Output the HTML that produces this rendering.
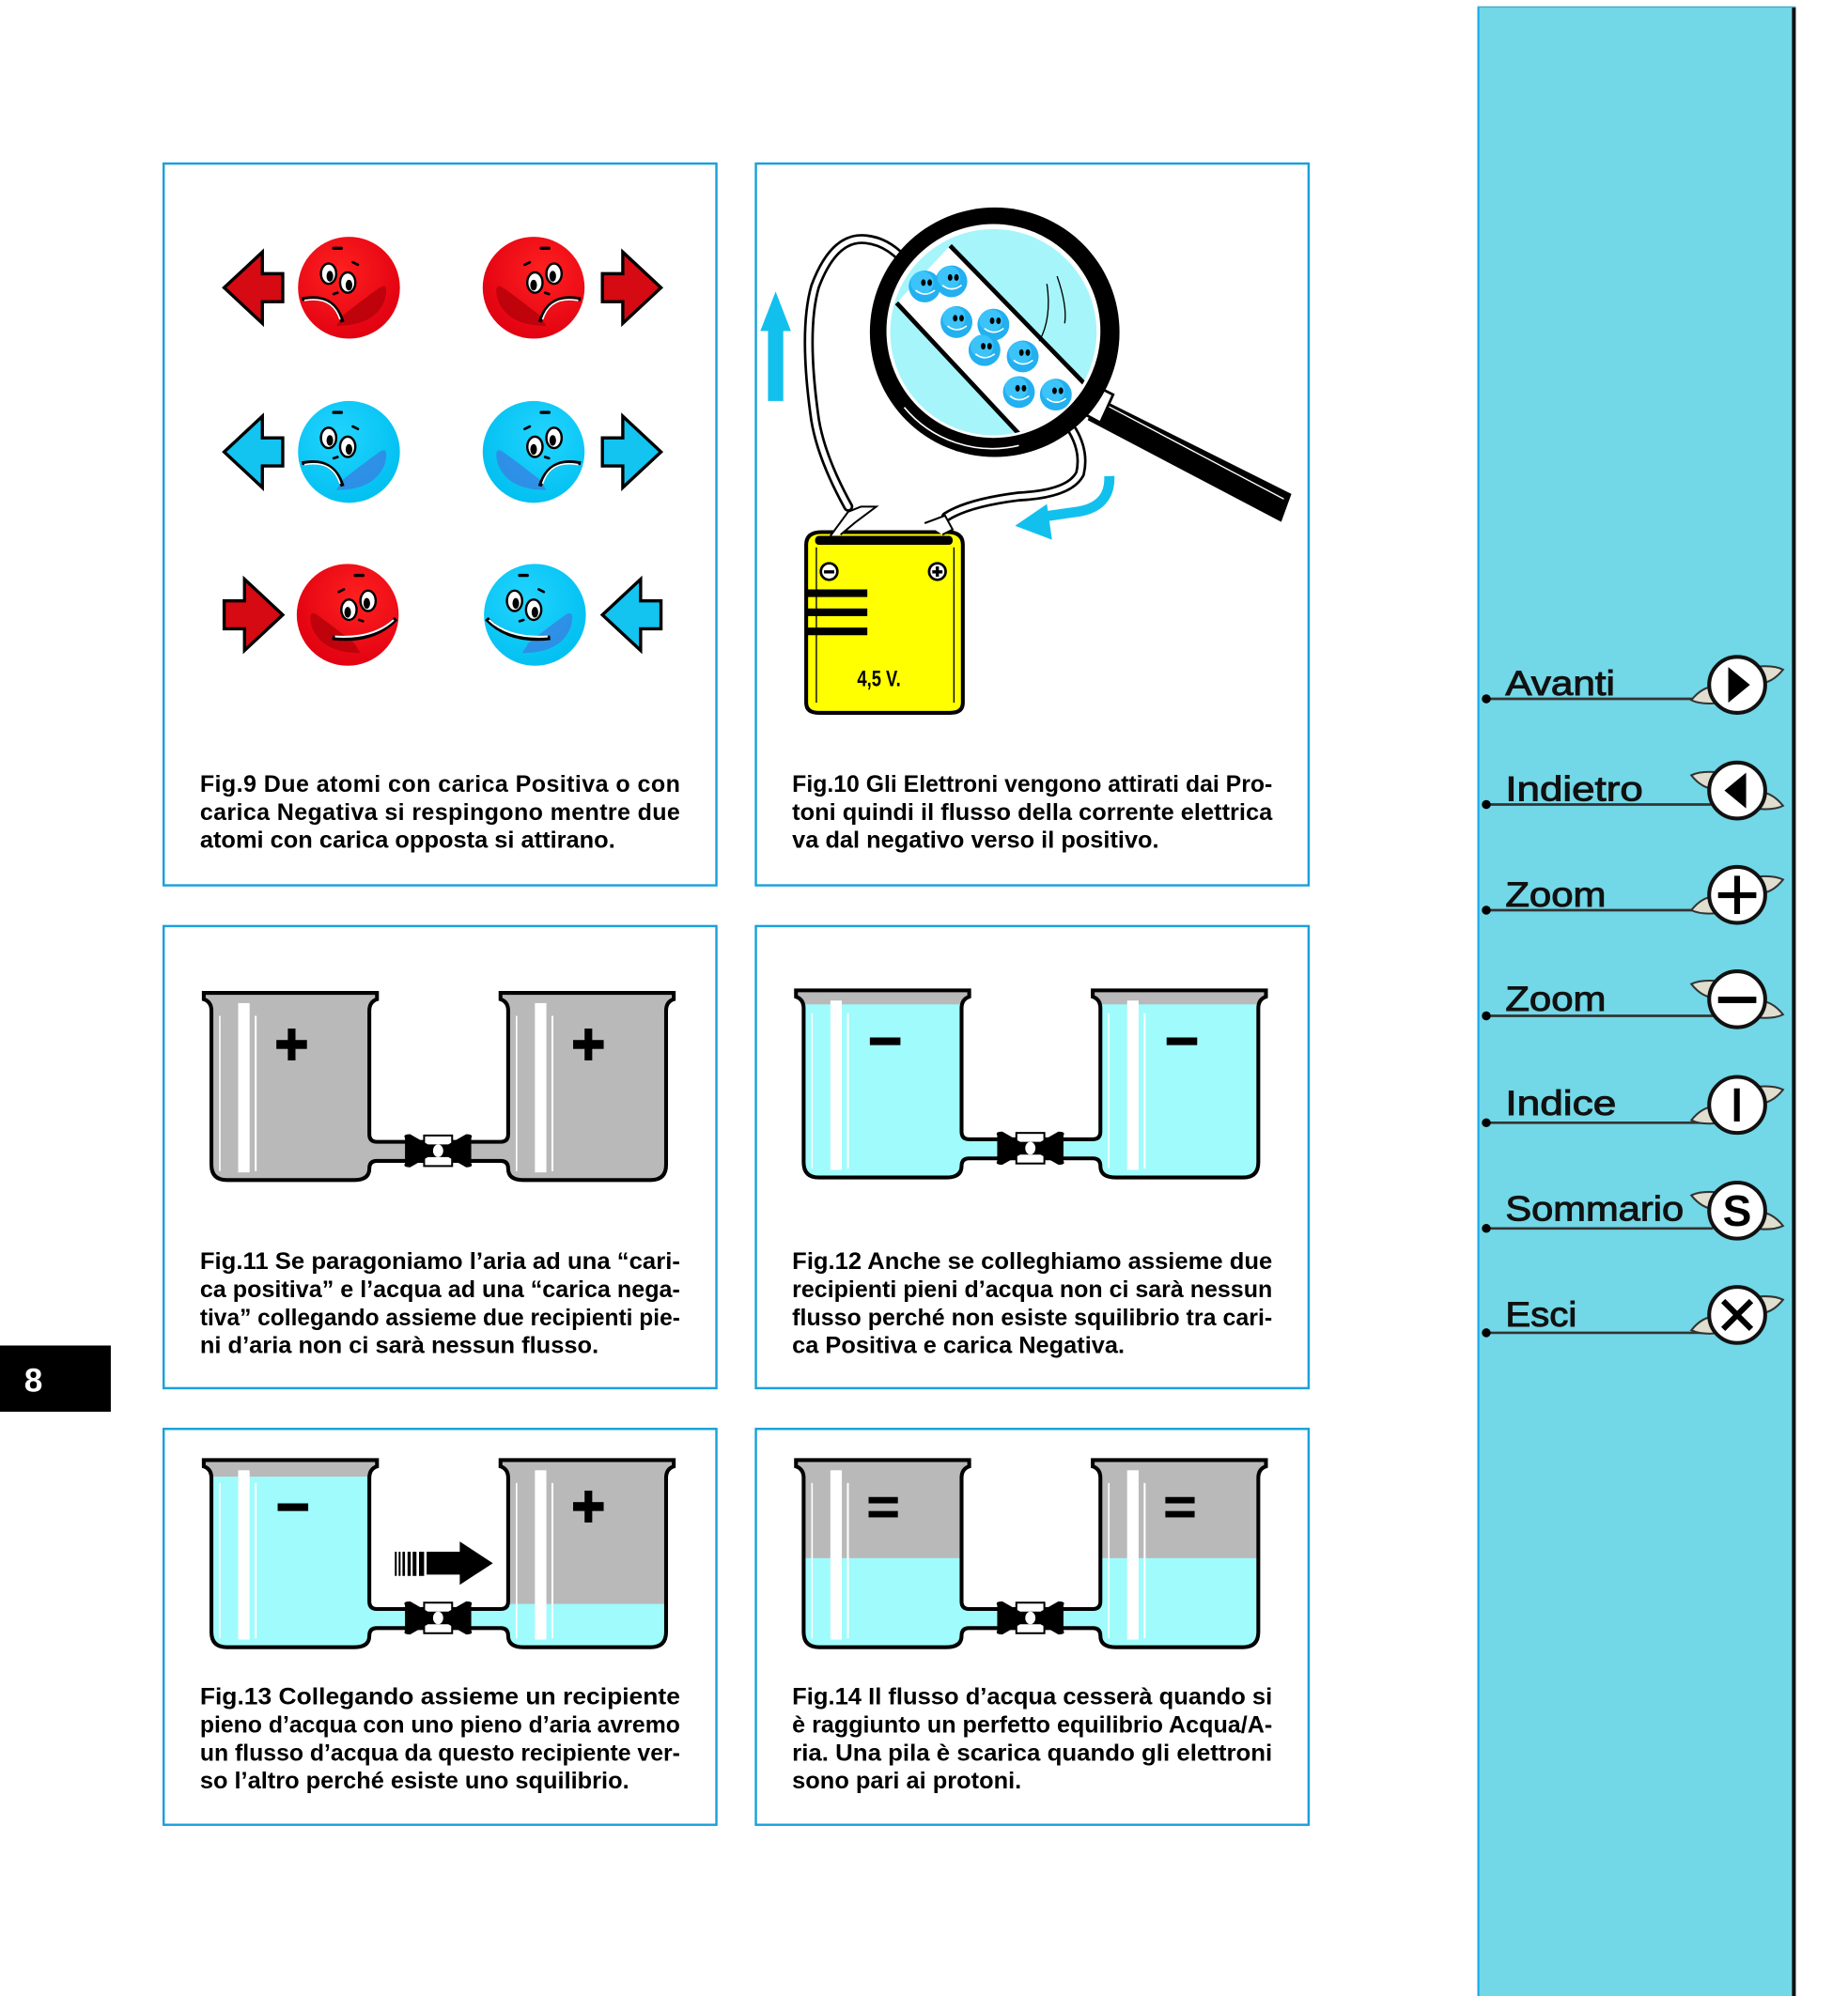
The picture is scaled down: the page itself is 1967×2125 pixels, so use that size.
<!DOCTYPE html>
<html><head><meta charset="utf-8">
<style>
html,body{margin:0;padding:0;background:#fff;width:1967px;height:2125px;overflow:hidden}
svg{display:block}
.cap{font-family:"Liberation Sans",Arial,sans-serif;font-weight:bold;font-size:18.5px;fill:#000}
.nav{font-family:"Liberation Sans",Arial,sans-serif;font-size:27px;fill:#111;stroke:#111;stroke-width:0.7}
</style></head>
<body>
<svg width="1967" height="2125" viewBox="0 0 1451 1568" preserveAspectRatio="none" xmlns="http://www.w3.org/2000/svg">
<defs>
 <path id="bk" d="M0,0 H136 V5 Q130,7 130,14 V111 Q130,117 136,117 H233 Q239,117 239,111 V14 Q239,7 233,5 V0 H369 V5 Q363,7 363,14 V135 Q363,147 351,147 H251 Q239,147 239,138 Q239,132 233,132 H136 Q130,132 130,138 Q130,147 118,147 H18 Q6,147 6,135 V14 Q6,7 0,5 Z"/>
 <clipPath id="bkc"><use href="#bk"/></clipPath>
 <g id="valve">
  <rect x="-11" y="-12" width="22" height="24" fill="#fff" stroke="#000" stroke-width="1.5"/>
  <path d="M-26,-10 Q-28,-13 -22,-13 L-8,-5 L8,-5 L22,-13 Q28,-13 26,-10 L26,10 Q28,13 22,13 L8,5 L-8,5 L-22,13 Q-28,13 -26,10 Z" fill="#000"/>
  <ellipse cx="0" cy="0" rx="4" ry="5" fill="#fff"/>
 </g>
 <g id="stripes">
  <rect x="27" y="8" width="9" height="133" fill="#fff"/>
  <rect x="40" y="18" width="1.5" height="122" fill="#fff"/>
  <rect x="12" y="18" width="1.2" height="122" fill="#fff"/>
  <rect x="260" y="8" width="9" height="133" fill="#fff"/>
  <rect x="273" y="18" width="1.5" height="122" fill="#fff"/>
  <rect x="245" y="18" width="1.2" height="122" fill="#fff"/>
 </g>
 <radialGradient id="rg" cx="0.4" cy="0.35" r="0.7"><stop offset="0" stop-color="#ff2020"/><stop offset="1" stop-color="#e00010"/></radialGradient>
 <radialGradient id="bg" cx="0.4" cy="0.35" r="0.7"><stop offset="0" stop-color="#22d4ff"/><stop offset="1" stop-color="#00bff0"/></radialGradient>
 <g id="eyes">
  <ellipse cx="-16" cy="-11" rx="6" ry="8" fill="#fff" stroke="#000" stroke-width="1.8"/>
  <ellipse cx="-15" cy="-9" rx="2.6" ry="4.2" fill="#000"/>
  <ellipse cx="-1" cy="-4" rx="6" ry="8" fill="#fff" stroke="#000" stroke-width="1.8"/>
  <ellipse cx="0" cy="-2" rx="2.6" ry="4.2" fill="#000"/>
  <path d="M-12,-31 h6" stroke="#000" stroke-width="2.5" stroke-linecap="round"/>
  <path d="M3,-20 l4,2" stroke="#000" stroke-width="2" stroke-linecap="round"/>
  <path d="M-12,5 l3,-1" stroke="#000" stroke-width="2" stroke-linecap="round"/>
 </g>
 <g id="sadR">
  <circle r="40" fill="url(#rg)"/>
  <path d="M-10,30 Q20,30 28,10 Q32,-5 24,0 Q10,10 -5,22 Z" fill="#b00008" opacity="0.75"/>
  <use href="#eyes"/>
  <path d="M-37,9 Q-12,4 -5,27" fill="none" stroke="#000" stroke-width="3"/>
  <path d="M-35,10 Q-13,6 -7,25" fill="none" stroke="#fff" stroke-width="1.2"/>
 </g>
 <g id="sadB">
  <circle r="40" fill="url(#bg)"/>
  <path d="M-10,30 Q20,30 28,10 Q32,-5 24,0 Q10,10 -5,22 Z" fill="#3a7de0" opacity="0.75"/>
  <use href="#eyes"/>
  <path d="M-37,9 Q-12,4 -5,27" fill="none" stroke="#000" stroke-width="3"/>
  <path d="M-35,10 Q-13,6 -7,25" fill="none" stroke="#fff" stroke-width="1.2"/>
 </g>
 <g id="hapR">
  <circle r="40" fill="url(#rg)"/>
  <path d="M-10,30 Q20,30 28,10 Q32,-5 24,0 Q10,10 -5,22 Z" fill="#b00008" opacity="0.75"/>
  <use href="#eyes"/>
  <path d="M-38,3 Q-20,22 12,18" fill="none" stroke="#000" stroke-width="3.5"/>
  <path d="M-36,4 Q-20,19 10,17" fill="none" stroke="#fff" stroke-width="1.5"/>
 </g>
 <g id="hapB">
  <circle r="40" fill="url(#bg)"/>
  <path d="M-10,30 Q20,30 28,10 Q32,-5 24,0 Q10,10 -5,22 Z" fill="#3a7de0" opacity="0.75"/>
  <use href="#eyes"/>
  <path d="M-38,3 Q-20,22 12,18" fill="none" stroke="#000" stroke-width="3.5"/>
  <path d="M-36,4 Q-20,19 10,17" fill="none" stroke="#fff" stroke-width="1.5"/>
 </g>
 <path id="arrL" d="M0,0 L30,-28 V-11 H46 V11 H30 V28 Z" stroke="#000" stroke-width="2.5" stroke-linejoin="miter"/>
 <g id="elec"><circle r="12.5" fill="#22b0f0"/><circle cx="-2" cy="-3" r="9" fill="#4fd0ff" opacity="0.6"/><ellipse cx="-1" cy="-3" rx="1.8" ry="2.6" fill="#000"/><ellipse cx="4" cy="-3" rx="1.8" ry="2.6" fill="#000"/><path d="M-7,3 Q0,9 8,3" fill="none" stroke="#fff" stroke-width="1.2"/></g>
 <g id="wing1"><path d="M-36,12 Q-25,-2 -10,2 L-12,14 Q-28,16 -36,12 Z M36,-12 Q25,2 10,-2 L12,-14 Q28,-16 36,-12 Z" fill="#e0dfcf" stroke="#333" stroke-width="1.5"/></g>
 <g id="wing2"><path d="M-36,-12 Q-25,2 -10,-2 L-12,-14 Q-28,-16 -36,-12 Z M36,12 Q25,-2 10,2 L12,14 Q28,16 36,12 Z" fill="#e0dfcf" stroke="#333" stroke-width="1.5"/></g>
</defs>

<rect x="1160" y="5" width="250" height="1570" fill="#72d7e6"/>
<rect x="1160" y="5" width="1.5" height="1570" fill="#12a7ea"/>
<rect x="1160" y="5" width="250" height="1" fill="#4aa8c8"/>
<rect x="1407" y="6" width="3" height="1570" fill="#111"/>

<rect x="0" y="1057" width="87" height="52" fill="#000"/>
<text x="19" y="1093" font-family="Liberation Sans,Arial,sans-serif" font-weight="bold" font-size="26" fill="#fff">8</text>

<g fill="none" stroke="#1aa0dc" stroke-width="1.8">
 <rect x="128.5" y="128.5" width="434" height="567"/>
 <rect x="593.5" y="128.5" width="434" height="567"/>
 <rect x="128.5" y="727.5" width="434" height="363"/>
 <rect x="593.5" y="727.5" width="434" height="363"/>
 <rect x="128.5" y="1122.5" width="434" height="311"/>
 <rect x="593.5" y="1122.5" width="434" height="311"/>
</g>

<use href="#arrL" x="176" y="226" fill="#d50a12"/>
<use href="#sadR" x="274" y="226"/>
<use href="#sadR" transform="translate(419,226) scale(-1,1)"/>
<use href="#arrL" transform="translate(519,226) scale(-1,1)" fill="#d50a12"/>
<use href="#arrL" x="176" y="355" fill="#13c3f0"/>
<use href="#sadB" x="274" y="355"/>
<use href="#sadB" transform="translate(419,355) scale(-1,1)"/>
<use href="#arrL" transform="translate(519,355) scale(-1,1)" fill="#13c3f0"/>
<use href="#arrL" transform="translate(222,483) scale(-1,1)" fill="#d50a12"/>
<use href="#hapR" transform="translate(273,483) scale(-1,1)"/>
<use href="#hapB" x="420" y="483"/>
<use href="#arrL" x="473" y="483" fill="#13c3f0"/>

<rect x="603" y="258" width="12" height="57" fill="#12c0ee"/>
<path d="M597,260 L609,229 L621,260 Z" fill="#12c0ee"/>
<path d="M871,374 Q872,398 846,402 L818,406" fill="none" stroke="#12c0ee" stroke-width="8"/>
<path d="M822,396 L797,413 L826,424 Z" fill="#12c0ee"/>
<g fill="none" stroke-linecap="round">
 <path d="M666,398 Q645,360 640,330 Q630,260 640,225 Q655,185 680,188 Q700,190 716,212" stroke="#000" stroke-width="8"/>
 <path d="M666,398 Q645,360 640,330 Q630,260 640,225 Q655,185 680,188 Q700,190 716,212" stroke="#fff" stroke-width="4"/>
 <path d="M743,406 Q760,395 800,390 Q840,388 848,372 Q852,355 842,338" stroke="#000" stroke-width="8"/>
 <path d="M743,406 Q760,395 800,390 Q840,388 848,372 Q852,355 842,338" stroke="#fff" stroke-width="4"/>
</g>
<path d="M862,312 L1014,388 L1006,410 L854,330 Z" fill="#000"/>
<path d="M868,318 L1008,392" stroke="#fff" stroke-width="1"/>
<path d="M860,303 L874,310 L864,332 L851,325 Z" fill="#fff" stroke="#000" stroke-width="2"/>
<circle cx="781" cy="261" r="98" fill="#000"/>
<path d="M710,320 A90,90 0 0 0 800,350" fill="none" stroke="#fff" stroke-width="1.2"/>
<path d="M820,190 A85,85 0 0 1 860,240" fill="none" stroke="#fff" stroke-width="1.2"/>
<circle cx="780" cy="260" r="84" fill="#fff"/>
<circle cx="780" cy="261" r="81" fill="#a6f5fa"/>
<clipPath id="lens"><circle cx="780" cy="261" r="81"/></clipPath>
<g clip-path="url(#lens)">
 <path d="M746,193 L857,307 L803,344 L704,238 Z" fill="#fff"/>
 <path d="M746,193 L857,307 M704,238 L803,344" stroke="#000" stroke-width="3.5"/>
 <path d="M830,217 Q838,240 836,254 M822,223 Q826,250 816,268" fill="none" stroke="#000" stroke-width="1"/>
</g>
<use href="#elec" x="726" y="225"/>
<use href="#elec" x="747" y="221"/>
<use href="#elec" x="751" y="253"/>
<use href="#elec" x="780" y="255"/>
<use href="#elec" x="773" y="275"/>
<use href="#elec" x="803" y="280"/>
<use href="#elec" x="800" y="308"/>
<use href="#elec" x="829" y="310"/>
<path d="M633,428 Q633,418 645,418 H744 Q756,418 756,428 V552 Q756,560 746,560 H643 Q633,560 633,552 Z" fill="#ffff00" stroke="#000" stroke-width="3"/>
<rect x="640" y="421" width="108" height="7" rx="3" fill="#000"/>
<line x1="641" y1="430" x2="641" y2="552" stroke="#000" stroke-width="1"/>
<line x1="749" y1="430" x2="749" y2="552" stroke="#000" stroke-width="1"/>
<circle cx="651" cy="449" r="6.5" fill="#fff" stroke="#000" stroke-width="2"/><rect x="647" y="448" width="8" height="2.5"/>
<circle cx="736" cy="449" r="6.5" fill="#fff" stroke="#000" stroke-width="2"/><rect x="732" y="448" width="8" height="2.5"/><rect x="734.7" y="445" width="2.5" height="8"/>
<rect x="632" y="463" width="49" height="6"/><rect x="632" y="478" width="49" height="6"/><rect x="632" y="493" width="49" height="6"/>
<text x="673" y="539" font-family="Liberation Sans,Arial,sans-serif" font-weight="bold" font-size="16" transform="translate(673,539) scale(0.85,1.1) translate(-673,-539)">4,5 V.</text>
<path d="M652,421 L666,402 L676,398 L688,398 L672,410 L660,420" fill="#fff" stroke="#000" stroke-width="1.5"/>
<path d="M726,411 L742,405 L748,416 L740,420" fill="#fff" stroke="#000" stroke-width="1.5"/>

<g transform="translate(160,780)">
 <g clip-path="url(#bkc)"><rect x="-5" y="-5" width="380" height="160" fill="#b9b9b9"/></g>
 <use href="#stripes"/>
 <use href="#bk" fill="none" stroke="#000" stroke-width="3"/>
 <use href="#valve" x="184" y="124"/>
 <rect x="57" y="37" width="24" height="7"/><rect x="66" y="28" width="6" height="25"/>
 <rect x="290" y="37" width="24" height="7"/><rect x="299" y="28" width="6" height="25"/>
</g>
<g transform="translate(625,778)">
 <g clip-path="url(#bkc)"><rect x="-5" y="-5" width="380" height="160" fill="#a0fbfc"/><rect x="-5" y="-5" width="380" height="16" fill="#b9b9b9"/></g>
 <use href="#stripes"/>
 <use href="#bk" fill="none" stroke="#000" stroke-width="3"/>
 <use href="#valve" x="184" y="124"/>
 <rect x="58" y="37" width="24" height="6"/>
 <rect x="291" y="37" width="24" height="6"/>
</g>
<g transform="translate(160,1147)">
 <g clip-path="url(#bkc)"><rect x="-5" y="-5" width="380" height="160" fill="#a0fbfc"/><rect x="-5" y="-5" width="190" height="18" fill="#b9b9b9"/><rect x="185" y="-5" width="190" height="118" fill="#b9b9b9"/></g>
 <use href="#stripes"/>
 <use href="#bk" fill="none" stroke="#000" stroke-width="3"/>
 <use href="#valve" x="184" y="124"/>
 <rect x="58" y="34" width="24" height="6"/>
 <rect x="290" y="33" width="24" height="7"/><rect x="299" y="24" width="6" height="25"/>
 <rect x="150" y="72" width="1.5" height="19"/><rect x="153" y="72" width="1.5" height="19"/><rect x="156" y="72" width="2" height="19"/><rect x="160" y="72" width="2.5" height="19"/><rect x="164" y="72" width="3" height="19"/><rect x="169" y="72" width="4" height="19"/>
 <path d="M175,72 H201 V64 L227,81 L201,98 V90 H175 Z"/>
</g>
<g transform="translate(625,1147)">
 <g clip-path="url(#bkc)"><rect x="-5" y="-5" width="380" height="160" fill="#a0fbfc"/><rect x="-5" y="-5" width="380" height="82" fill="#b9b9b9"/></g>
 <use href="#stripes"/>
 <use href="#bk" fill="none" stroke="#000" stroke-width="3"/>
 <use href="#valve" x="184" y="124"/>
 <rect x="57" y="29" width="23" height="5"/><rect x="57" y="40" width="23" height="5"/>
 <rect x="290" y="29" width="23" height="5"/><rect x="290" y="40" width="23" height="5"/>
</g>

<g class="cap">
 <text x="157" y="622" textLength="377" lengthAdjust="spacing">Fig.9 Due atomi con carica Positiva o con</text>
 <text x="157" y="644" textLength="377" lengthAdjust="spacing">carica Negativa si respingono mentre due</text>
 <text x="157" y="666" textLength="326" lengthAdjust="spacingAndGlyphs">atomi con carica opposta si attirano.</text>

 <text x="622" y="622" textLength="377" lengthAdjust="spacingAndGlyphs">Fig.10 Gli Elettroni vengono attirati dai Pro-</text>
 <text x="622" y="644" textLength="377" lengthAdjust="spacingAndGlyphs">toni quindi il flusso della corrente elettrica</text>
 <text x="622" y="666" textLength="288" lengthAdjust="spacingAndGlyphs">va dal negativo verso il positivo.</text>

 <text x="157" y="997" textLength="377" lengthAdjust="spacingAndGlyphs">Fig.11 Se paragoniamo l’aria ad una “cari-</text>
 <text x="157" y="1019" textLength="377" lengthAdjust="spacingAndGlyphs">ca positiva” e l’acqua ad una “carica nega-</text>
 <text x="157" y="1041" textLength="377" lengthAdjust="spacingAndGlyphs">tiva” collegando assieme due recipienti pie-</text>
 <text x="157" y="1063" textLength="313" lengthAdjust="spacingAndGlyphs">ni d’aria non ci sarà nessun flusso.</text>

 <text x="622" y="997" textLength="377" lengthAdjust="spacingAndGlyphs">Fig.12 Anche se colleghiamo assieme due</text>
 <text x="622" y="1019" textLength="377" lengthAdjust="spacingAndGlyphs">recipienti pieni d’acqua non ci sarà nessun</text>
 <text x="622" y="1041" textLength="377" lengthAdjust="spacingAndGlyphs">flusso perché non esiste squilibrio tra cari-</text>
 <text x="622" y="1063" textLength="261" lengthAdjust="spacingAndGlyphs">ca Positiva e carica Negativa.</text>

 <text x="157" y="1339" textLength="377" lengthAdjust="spacingAndGlyphs">Fig.13 Collegando assieme un recipiente</text>
 <text x="157" y="1361" textLength="377" lengthAdjust="spacingAndGlyphs">pieno d’acqua con uno pieno d’aria avremo</text>
 <text x="157" y="1383" textLength="377" lengthAdjust="spacingAndGlyphs">un flusso d’acqua da questo recipiente ver-</text>
 <text x="157" y="1405" textLength="337" lengthAdjust="spacingAndGlyphs">so l’altro perché esiste uno squilibrio.</text>

 <text x="622" y="1339" textLength="377" lengthAdjust="spacingAndGlyphs">Fig.14 Il flusso d’acqua cesserà quando si</text>
 <text x="622" y="1361" textLength="377" lengthAdjust="spacingAndGlyphs">è raggiunto un perfetto equilibrio Acqua/A-</text>
 <text x="622" y="1383" textLength="377" lengthAdjust="spacingAndGlyphs">ria. Una pila è scarica quando gli elettroni</text>
 <text x="622" y="1405" textLength="180" lengthAdjust="spacingAndGlyphs">sono pari ai protoni.</text>
</g>

<g>
 <g stroke="#333" stroke-width="2"><line x1="1167" y1="549" x2="1345" y2="549"/><line x1="1167" y1="632" x2="1345" y2="632"/><line x1="1167" y1="715" x2="1345" y2="715"/><line x1="1167" y1="798" x2="1345" y2="798"/><line x1="1167" y1="882" x2="1345" y2="882"/><line x1="1167" y1="965" x2="1345" y2="965"/><line x1="1167" y1="1047" x2="1345" y2="1047"/></g>
 <g fill="#000"><circle cx="1167" cy="549" r="3.5"/><circle cx="1167" cy="632" r="3.5"/><circle cx="1167" cy="715" r="3.5"/><circle cx="1167" cy="798" r="3.5"/><circle cx="1167" cy="882" r="3.5"/><circle cx="1167" cy="965" r="3.5"/><circle cx="1167" cy="1047" r="3.5"/></g>
 <text class="nav" x="1182" y="546" textLength="86" lengthAdjust="spacingAndGlyphs">Avanti</text>
 <text class="nav" x="1182" y="629" textLength="108" lengthAdjust="spacingAndGlyphs">Indietro</text>
 <text class="nav" x="1182" y="712" textLength="79" lengthAdjust="spacingAndGlyphs">Zoom</text>
 <text class="nav" x="1182" y="794" textLength="79" lengthAdjust="spacingAndGlyphs">Zoom</text>
 <text class="nav" x="1182" y="876" textLength="87" lengthAdjust="spacingAndGlyphs">Indice</text>
 <text class="nav" x="1182" y="959" textLength="140" lengthAdjust="spacingAndGlyphs">Sommario</text>
 <text class="nav" x="1182" y="1042" textLength="56" lengthAdjust="spacingAndGlyphs">Esci</text>

 <g stroke="#111" stroke-width="3" fill="#fff">
  <use href="#wing1" x="1364" y="538"/><circle cx="1364" cy="538" r="22"/>
  <use href="#wing2" x="1364" y="621"/><circle cx="1364" cy="621" r="22"/>
  <use href="#wing1" x="1364" y="703"/><circle cx="1364" cy="703" r="22"/>
  <use href="#wing2" x="1364" y="785"/><circle cx="1364" cy="785" r="22"/>
  <use href="#wing1" x="1364" y="868"/><circle cx="1364" cy="868" r="22"/>
  <use href="#wing2" x="1364" y="951"/><circle cx="1364" cy="951" r="22"/>
  <use href="#wing1" x="1364" y="1033"/><circle cx="1364" cy="1033" r="22"/>
 </g>
 <g fill="#000">
  <path d="M1357,524 L1374,538 L1357,552 Z"/>
  <path d="M1371,607 L1354,621 L1371,635 Z"/>
  <rect x="1349" y="701" width="30" height="4.5"/><rect x="1361.7" y="688" width="4.5" height="30"/>
  <rect x="1349" y="783" width="30" height="5"/>
  <rect x="1361.5" y="855" width="4.5" height="26"/>
  <text x="1364" y="963" text-anchor="middle" font-family="Liberation Sans,Arial,sans-serif" font-weight="bold" font-size="34">S</text>
  <path d="M1353,1022 L1375,1044 M1375,1022 L1353,1044" stroke="#000" stroke-width="4.5"/>
 </g>
</g>
</svg>
</body></html>
